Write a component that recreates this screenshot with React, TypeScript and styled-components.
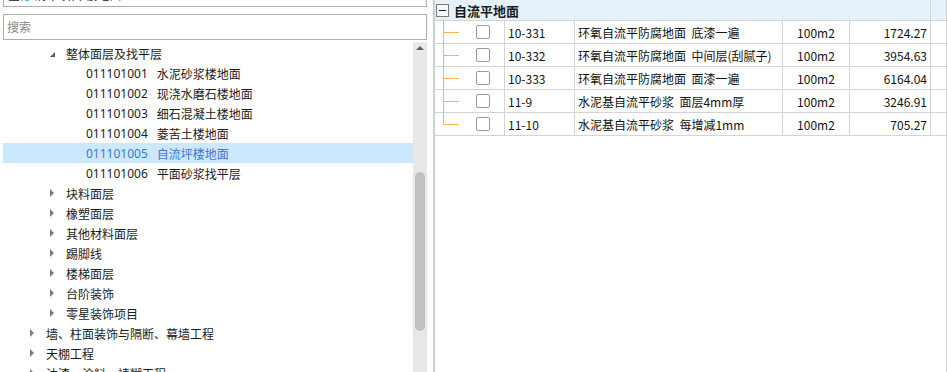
import React from "react";
import styled, { createGlobalStyle } from "styled-components";

const GlobalStyle = createGlobalStyle`
  html, body {
    margin: 0;
    padding: 0;
    background: #fff;
  }
  body {
    font-family: "Noto Sans", "Noto Sans CJK SC", sans-serif;
    overflow: hidden;
  }
`;

const Page = styled.div`
  display: flex;
  width: 947px;
  height: 372px;
  overflow: hidden;
  background: #fff;
`;

const LeftPane = styled.div`
  width: 433px;
  flex-shrink: 0;
  display: flex;
  flex-direction: column;
  padding-left: 3px;
  box-sizing: border-box;
`;

const FilterBox = styled.div`
  width: 424px;
  height: 24px;
  margin-top: -17px;
  box-sizing: border-box;
  border: 1px solid #adadad;
  font-size: 12px;
  line-height: 22px;
  padding-left: 4px;
  color: #111;
  font-family: "Noto Sans CJK SC", sans-serif;
`;

const SearchBox = styled.div`
  width: 424px;
  height: 26px;
  margin-top: 7px;
  box-sizing: border-box;
  border: 1px solid #adadad;
  font-size: 12px;
  line-height: 24px;
  padding-left: 3px;
  color: #8a8a8a;
  font-family: "Noto Sans CJK SC", sans-serif;
`;

const TreeViewport = styled.div`
  flex: 1;
  width: 424px;
  margin-top: 2px;
  display: flex;
  overflow: hidden;
`;

const TreeList = styled.div`
  flex: 1;
  padding-top: 1px;
`;

const Row = styled.div<{ $level: number; $selected?: boolean }>`
  height: 20px;
  display: flex;
  align-items: center;
  padding-left: ${(p) => 23 + (p.$level - 1) * 20}px;
  background: ${(p) => (p.$selected ? "#cce8ff" : "transparent")};
  color: ${(p) => (p.$selected ? "#3a78cc" : "#1b1b1b")};
  font-size: 12px;
  white-space: nowrap;
`;

const CaretBox = styled.span`
  width: 20px;
  height: 20px;
  flex-shrink: 0;
  display: flex;
  align-items: center;
  padding-left: 4px;
  box-sizing: border-box;
`;

const Caret = styled.span<{ $open: boolean }>`
  width: 0;
  height: 0;
  border-style: solid;
  ${(p) =>
    p.$open
      ? `border-width: 0 0 5px 5px;
         border-color: transparent transparent #595959 transparent;
         margin-top: 3px;`
      : `border-width: 4px 0 4px 4px;
         border-color: transparent transparent transparent #7d7d7d;`}
`;

const Code = styled.span`
  margin-right: 9px;
`;

const Label = styled.span`
  font-family: "Noto Sans CJK SC", sans-serif;
`;

const ScrollTrack = styled.div`
  width: 14px;
  background: #e8e8e8;
  display: flex;
  flex-direction: column;
  align-items: center;
`;

const UpArrow = styled.span`
  width: 0;
  height: 0;
  margin-top: 4px;
  border-style: solid;
  border-width: 0 4px 4px 4px;
  border-color: transparent transparent #606060 transparent;
`;

const Thumb = styled.div`
  width: 10px;
  height: 159px;
  margin-top: 122px;
  border-radius: 5px;
  background: #c1c1c1;
`;

const RightPane = styled.div`
  flex: 1;
  border-left: 2px solid #d0d0d0;
  display: flex;
  flex-direction: column;
  font-family: "Noto Sans CJK SC", sans-serif;
  font-size: 12px;
  color: #111;
`;

const Table = styled.div`
  border-right: 1px solid #d0d0d0;
  flex: 1;
`;

const GroupHeader = styled.div`
  display: grid;
  grid-template-columns: 496px 1fr;
  height: 21px;
  background: #e5f1fb;
  border-bottom: 1px solid #d4d4d4;
  box-sizing: border-box;
`;

const GroupTitle = styled.div`
  display: flex;
  align-items: center;
  border-right: 1px solid #d4d4d4;
  padding-left: 1px;
  font-size: 13px;
  font-weight: bold;
  color: #1a1a1a;
`;

const MinusBox = styled.span`
  width: 13px;
  height: 13px;
  box-sizing: border-box;
  border: 1px solid #7a7a7a;
  background: #f4f9fd;
  margin-right: 5px;
  display: flex;
  align-items: center;
  justify-content: center;
  &::after {
    content: "";
    width: 7px;
    height: 1px;
    background: #222;
  }
`;

const Rows = styled.div`
  position: relative;
`;

const DataRow = styled.div`
  display: grid;
  grid-template-columns: 70px 70px 208px 67px 81px 1fr;
  height: 23px;
`;

const Cell = styled.div<{ $align?: "left" | "center" | "right"; $last?: boolean }>`
  box-sizing: border-box;
  border-bottom: 1px solid #d4d4d4;
  border-right: ${(p) => (p.$last ? "none" : "1px solid #d4d4d4")};
  display: flex;
  align-items: center;
  justify-content: ${(p) =>
    p.$align === "right" ? "flex-end" : p.$align === "center" ? "center" : "flex-start"};
  padding: 0 3px;
  white-space: pre;
  overflow: hidden;
`;

const lineColor = "#f7b450";

const TreeCell = styled(Cell)`
  padding-left: 41px;
  position: relative;
  &::before {
    content: "";
    position: absolute;
    left: 8px;
    top: 11px;
    width: 16px;
    height: 1px;
    background: ${lineColor};
  }
`;

// vertical connector running from the group header down to the last branch
const TreeStem = styled.div<{ $rows: number }>`
  position: absolute;
  left: 8px;
  top: -1px;
  width: 1px;
  height: ${(p) => (p.$rows - 1) * 23 + 13}px;
  background: ${lineColor};
  z-index: 2;
`;

const CheckBox = styled.span`
  width: 14px;
  height: 14px;
  box-sizing: border-box;
  border: 1px solid #9a9a9a;
  border-radius: 2px;
  background: #fff;
`;

type TreeItem = { level: number; text: string; code?: string; open?: boolean; leaf?: boolean; selected?: boolean };

const tree: TreeItem[] = [
  { level: 2, text: "整体面层及找平层", open: true },
  { level: 3, code: "011101001", text: "水泥砂浆楼地面", leaf: true },
  { level: 3, code: "011101002", text: "现浇水磨石楼地面", leaf: true },
  { level: 3, code: "011101003", text: "细石混凝土楼地面", leaf: true },
  { level: 3, code: "011101004", text: "菱苦土楼地面", leaf: true },
  { level: 3, code: "011101005", text: "自流坪楼地面", leaf: true, selected: true },
  { level: 3, code: "011101006", text: "平面砂浆找平层", leaf: true },
  { level: 2, text: "块料面层" },
  { level: 2, text: "橡塑面层" },
  { level: 2, text: "其他材料面层" },
  { level: 2, text: "踢脚线" },
  { level: 2, text: "楼梯面层" },
  { level: 2, text: "台阶装饰" },
  { level: 2, text: "零星装饰项目" },
  { level: 1, text: "墙、柱面装饰与隔断、幕墙工程" },
  { level: 1, text: "天棚工程" },
  { level: 1, text: "油漆、涂料、裱糊工程" },
];

const quotas = [
  { code: "10-331", name: "环氧自流平防腐地面  底漆一遍", unit: "100m2", price: "1724.27" },
  { code: "10-332", name: "环氧自流平防腐地面  中间层(刮腻子)", unit: "100m2", price: "3954.63" },
  { code: "10-333", name: "环氧自流平防腐地面  面漆一遍", unit: "100m2", price: "6164.04" },
  { code: "11-9", name: "水泥基自流平砂浆  面层4mm厚", unit: "100m2", price: "3246.91" },
  { code: "11-10", name: "水泥基自流平砂浆  每增减1mm", unit: "100m2", price: "705.27" },
];

export default function App() {
  return (
    <Page>
      <GlobalStyle />
      <LeftPane>
        <FilterBox>全部 清单项目 楼地面</FilterBox>
        <SearchBox>搜索</SearchBox>
        <TreeViewport>
          <TreeList>
            {tree.map((item, i) => (
              <Row key={i} $level={item.level} $selected={item.selected}>
                <CaretBox>{!item.leaf && <Caret $open={!!item.open} />}</CaretBox>
                {item.code && <Code>{item.code}</Code>}
                <Label>{item.text}</Label>
              </Row>
            ))}
          </TreeList>
          <ScrollTrack>
            <UpArrow />
            <Thumb />
          </ScrollTrack>
        </TreeViewport>
      </LeftPane>
      <RightPane>
        <Table>
          <GroupHeader>
            <GroupTitle>
              <MinusBox />
              自流平地面
            </GroupTitle>
            <div />
          </GroupHeader>
          <Rows>
            <TreeStem $rows={quotas.length} />
            {quotas.map((q) => (
              <DataRow key={q.code}>
                <TreeCell>
                  <CheckBox />
                </TreeCell>
                <Cell>{q.code}</Cell>
                <Cell>{q.name}</Cell>
                <Cell $align="center">{q.unit}</Cell>
                <Cell $align="right">{q.price}</Cell>
                <Cell $last />
              </DataRow>
            ))}
          </Rows>
        </Table>
      </RightPane>
    </Page>
  );
}
